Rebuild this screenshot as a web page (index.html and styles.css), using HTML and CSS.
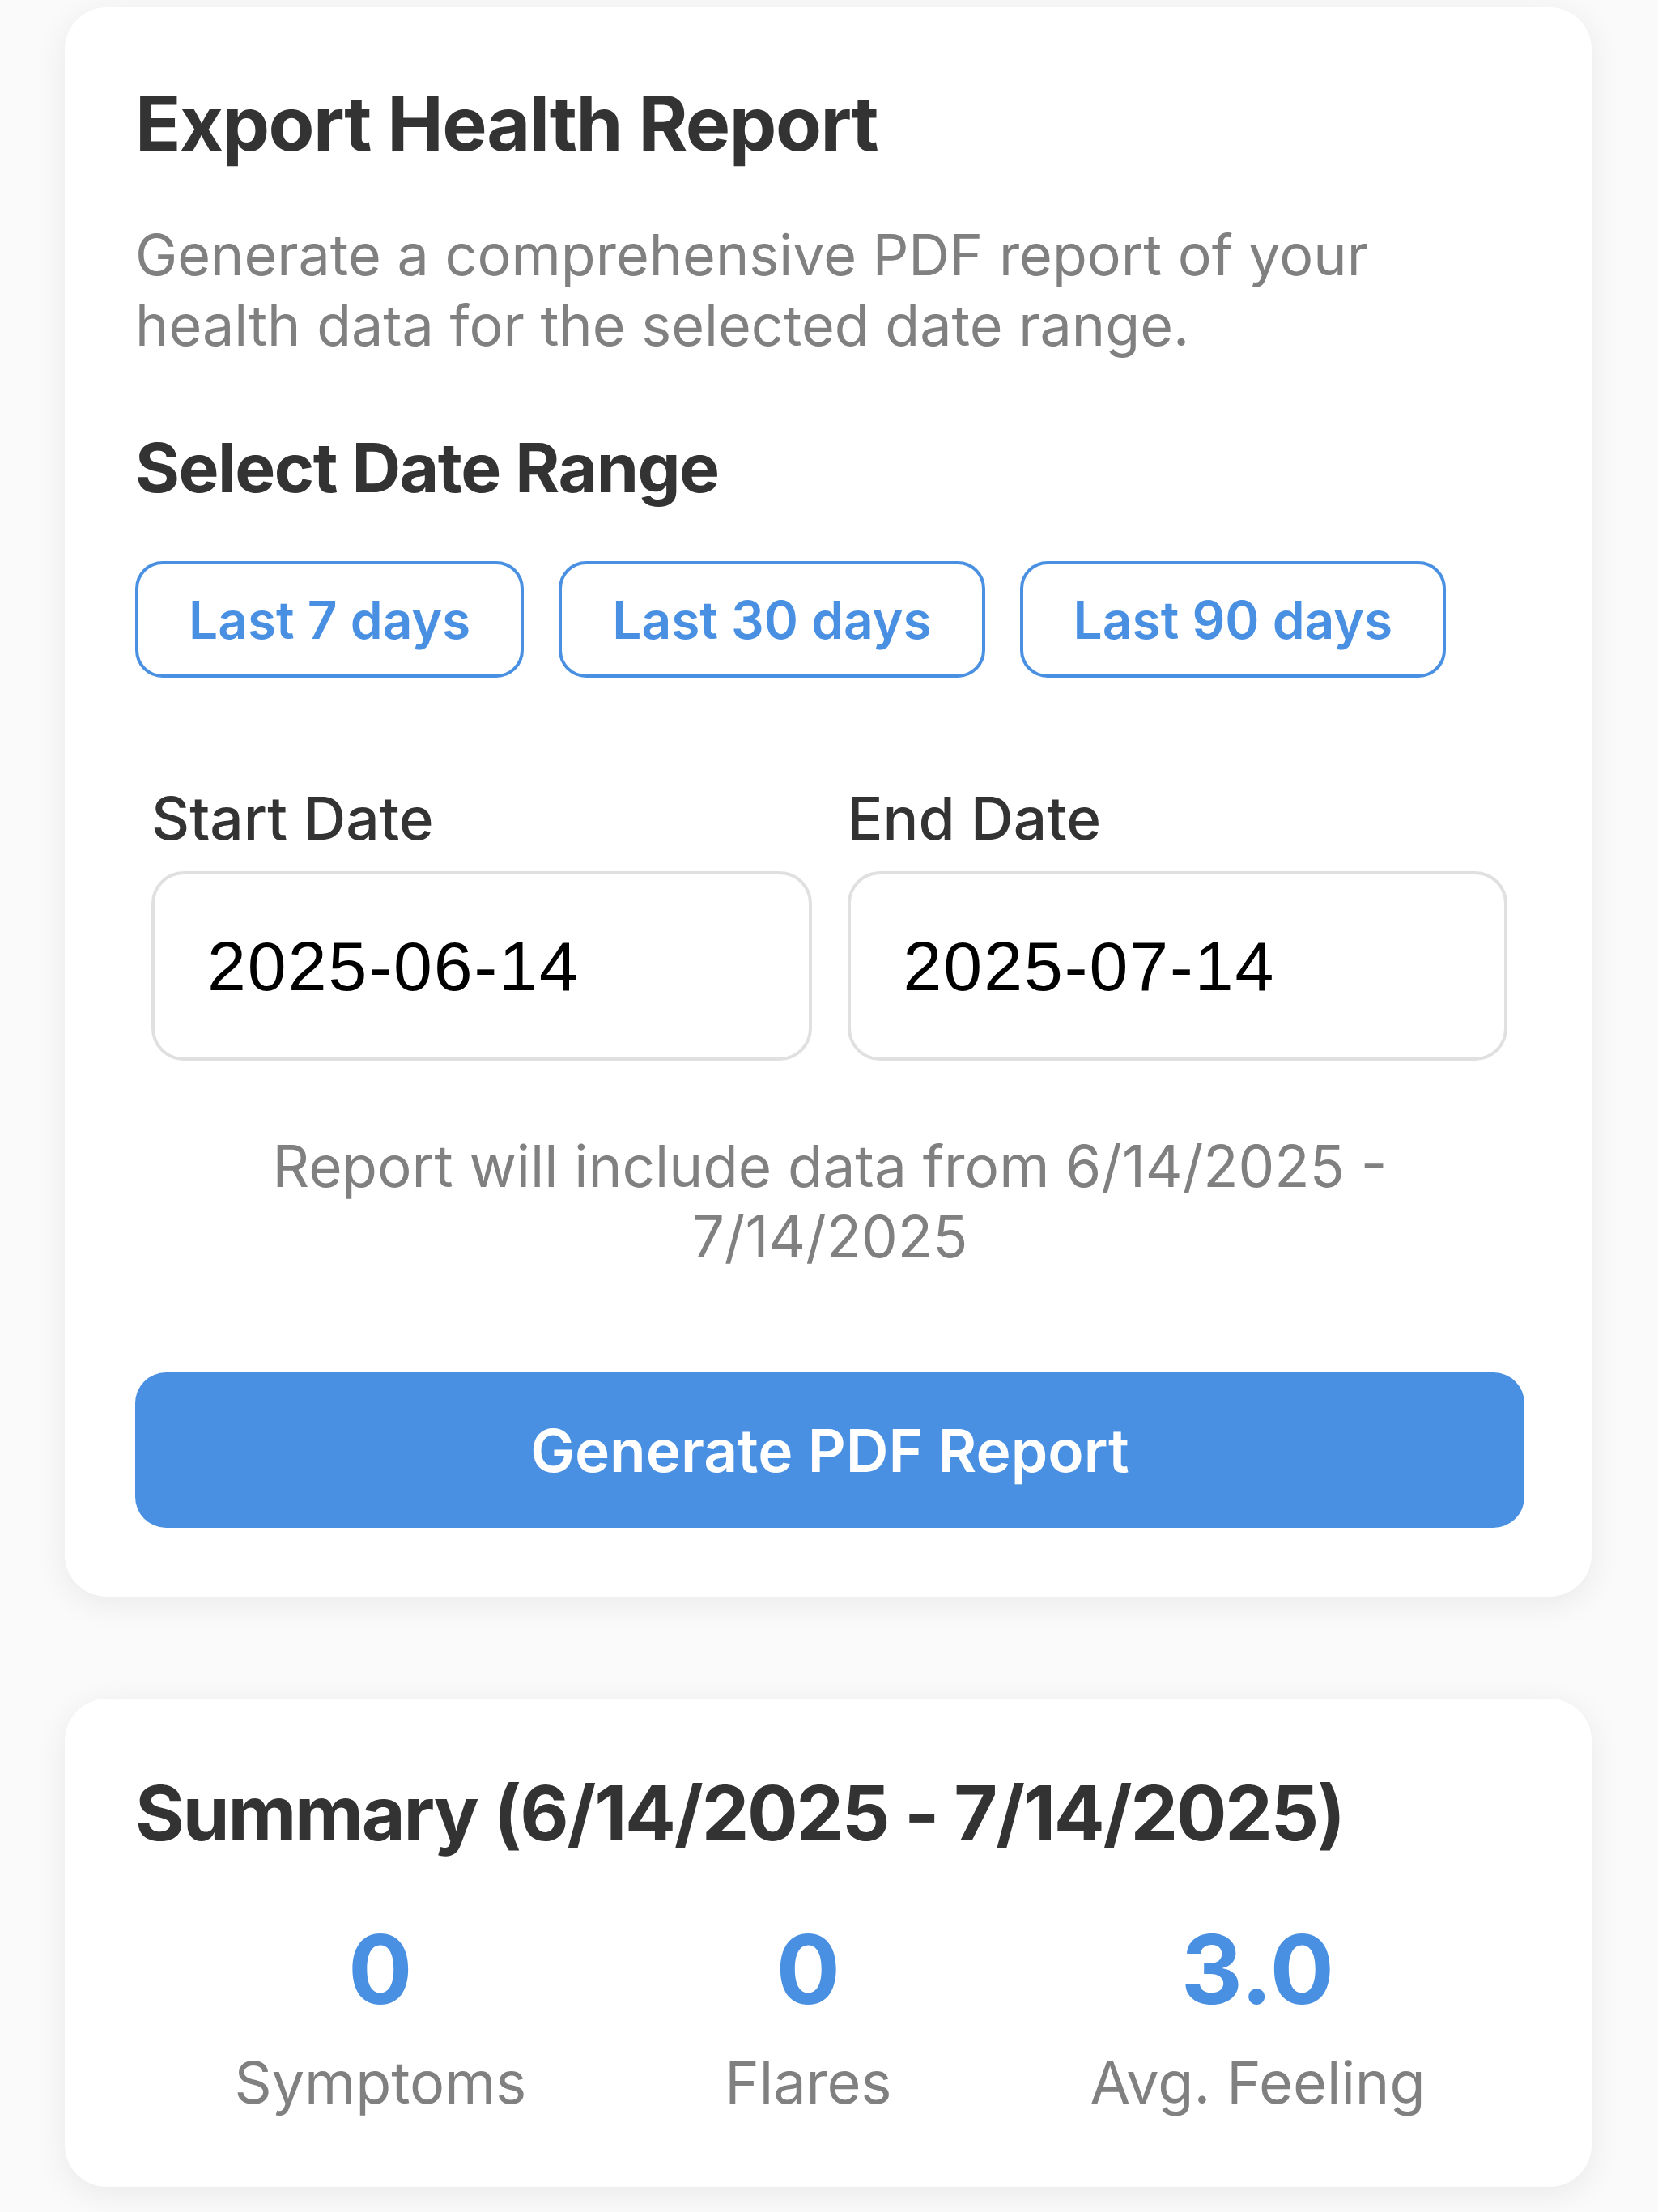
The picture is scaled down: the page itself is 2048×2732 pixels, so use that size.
FILE: index.html
```html
<!DOCTYPE html>
<html lang="en">
<head>
<meta charset="utf-8">
<title>Export Health Report</title>
<link rel="stylesheet" href="styles.css">
</head>
<body>
<main class="page">
  <section class="card export-card">
    <h1 class="title">Export Health Report</h1>
    <p class="desc">Generate a comprehensive PDF report of your health data for the selected date range.</p>
    <h2 class="subtitle">Select Date Range</h2>
    <div class="presets">
      <button class="preset">Last 7 days</button>
      <button class="preset">Last 30 days</button>
      <button class="preset">Last 90 days</button>
    </div>
    <div class="dates">
      <div class="date-field">
        <label class="date-label">Start Date</label>
        <div class="date-input">2025-06-14</div>
      </div>
      <div class="date-field">
        <label class="date-label">End Date</label>
        <div class="date-input">2025-07-14</div>
      </div>
    </div>
    <p class="note">Report will include data from 6/14/2025 - 7/14/2025</p>
    <button class="generate">Generate PDF Report</button>
  </section>

  <section class="card summary-card">
    <h2 class="title summary-title">Summary (6/14/2025 - 7/14/2025)</h2>
    <div class="stats">
      <div class="stat">
        <div class="stat-value">0</div>
        <div class="stat-label">Symptoms</div>
      </div>
      <div class="stat">
        <div class="stat-value">0</div>
        <div class="stat-label">Flares</div>
      </div>
      <div class="stat">
        <div class="stat-value">3.0</div>
        <div class="stat-label">Avg. Feeling</div>
      </div>
    </div>
  </section>
</main>
</body>
</html>
```

FILE: styles.css
```css
* { box-sizing: border-box; }
html, body { margin: 0; padding: 0; }
body {
  background: #fafafa;
  font-family: Inter, "Noto Sans", sans-serif;
  color: #333;
  width: 2048px;
  height: 2732px;
  overflow: hidden;
}
.page {
  padding: 9px 82px 0 80px;
  display: flex;
  flex-direction: column;
  gap: 126px;
}
.card {
  background: #fff;
  border-radius: 52px;
  box-shadow: 0 8px 40px rgba(0, 0, 0, 0.07);
}
.export-card {
  padding: 86px 83px 85px 87px;
}
.title {
  margin: 0;
  font-size: 93px;
  line-height: 114px;
  font-weight: 700;
  color: #333;
  letter-spacing: -1.5px;
}
.summary-title {
  letter-spacing: -2.2px;
}
.desc {
  margin: 62px 0 0;
  font-size: 70px;
  line-height: 87px;
  color: #808080;
  font-weight: 400;
}
.subtitle {
  margin: 81px 0 0;
  font-size: 84px;
  line-height: 104px;
  font-weight: 700;
  color: #333;
  letter-spacing: -1.5px;
}
.presets {
  margin-top: 63px;
  display: flex;
  gap: 43px;
}
.preset {
  height: 144px;
  padding: 0 62px;
  background: #fff;
  border: 4px solid #4a90e2;
  border-radius: 34px;
  color: #4a90e2;
  font-family: Inter, "Noto Sans", sans-serif;
  font-size: 64px;
  font-weight: 600;
}
.dates {
  margin-top: 131px;
  padding: 0 21px 0 20px;
  display: flex;
  gap: 44px;
}
.date-field {
  flex: 1;
  display: flex;
  flex-direction: column;
  gap: 22px;
}
.date-label {
  font-size: 73px;
  line-height: 86px;
  font-weight: 500;
  color: #333;
}
.date-input {
  height: 234px;
  border: 4px solid #e0e0e0;
  border-radius: 40px;
  padding: 0 65px;
  display: flex;
  align-items: center;
  font-family: "Liberation Sans", Arial, sans-serif;
  font-size: 86px;
  letter-spacing: 2px;
  color: #000;
}
.note {
  margin: 87px 0 0;
  padding: 0 60px;
  text-align: center;
  font-size: 71px;
  line-height: 87px;
  color: #808080;
}
.generate {
  display: block;
  width: 100%;
  margin-top: 124px;
  height: 192px;
  border: none;
  border-radius: 38px;
  background: #4a90e2;
  color: #fff;
  font-family: Inter, "Noto Sans", sans-serif;
  font-size: 73px;
  font-weight: 600;
}
.summary-card {
  padding: 84px 83px 86px 87px;
}
.stats {
  margin-top: 65px;
  display: flex;
  justify-content: space-around;
}
.stat {
  display: flex;
  flex-direction: column;
  align-items: center;
  gap: 24px;
}
.stat-value {
  font-size: 118px;
  line-height: 143px;
  font-weight: 700;
  color: #4a90e2;
}
.stat-label {
  font-size: 72px;
  line-height: 87px;
  color: #808080;
}
```
